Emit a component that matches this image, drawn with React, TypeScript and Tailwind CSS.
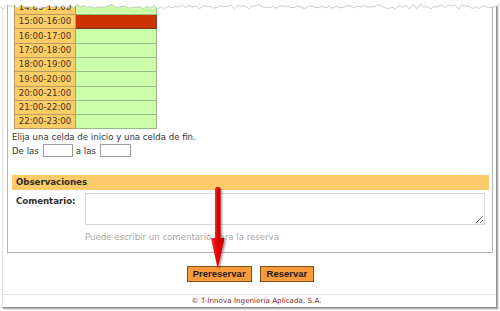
import React from "react";

const rows: [string, string][] = [
  ["14:00-15:00", "h-[14px]"],
  ["15:00-16:00", "h-[14px]"],
  ["16:00-17:00", "h-[15px]"],
  ["17:00-18:00", "h-[14px]"],
  ["18:00-19:00", "h-[14px]"],
  ["19:00-20:00", "h-[15px]"],
  ["20:00-21:00", "h-[14px]"],
  ["21:00-22:00", "h-[14px]"],
  ["22:00-23:00", "h-[14px]"],
];

const wavePts = (() => {
  const pts: [number, number][] = [];
  let s = 11;
  for (let x = 0; x <= 498; x += 3.5) {
    s = (s * 9301 + 49297) % 233280;
    const r = s / 233280;
    const y = 5 + r * 3.5 + (Math.floor(x / 3.5) % 2 === 0 ? -0.8 : 0.8);
    pts.push([x, y]);
  }
  return pts;
})();

const waveFill =
  "M0 0 " + wavePts.map(([x, y]) => `L${x.toFixed(1)} ${y.toFixed(1)}`).join(" ") + " L500 0 Z";
const waveLine =
  "M" + wavePts.map(([x, y]) => `${x.toFixed(1)} ${y.toFixed(1)}`).join(" L");

export default function App() {
  return (
    <div
      className="relative w-[500px] h-[311px] overflow-hidden bg-white text-[#333]"
      style={{ fontFamily: '"DejaVu Sans", Verdana, sans-serif' }}
    >
      <div className="ml-[2px] w-[495px] h-[308px] border-l border-l-[#e2e2e2] border-r border-r-[#8f8f8f] border-b border-b-[#8a8a8a] shadow-[1px_1px_0_#b8b8b8,2px_2px_0_#e0e0e0] flex flex-col">
        {/* Panel */}
        <div className="ml-[4px] w-[486px] h-[253px] border-l border-r border-b border-[#b4b4b4] flex flex-col">
          {/* table */}
          <div className="mt-[1px] ml-[6px] w-[143px] flex flex-col">
            {rows.map(([r, h]) => (
              <div key={r} className={`flex ${h}`}>
                <div className="w-[62px] bg-[#ffcc66] border-l border-b border-r border-[#b59a62] flex items-center justify-center text-[8.6px] leading-[13px] text-[#3a3020]">
                  {r}
                </div>
                <div
                  className={
                    r === "15:00-16:00"
                      ? "w-[81px] bg-[#cc3300] border-b border-r border-[#7a3a20]"
                      : "w-[81px] bg-[#ccffaa] border-b border-r border-[#98b886]"
                  }
                />
              </div>
            ))}
          </div>
          <div className="mt-[2px] ml-[4px] h-[12px] text-[8.6px] leading-[12px]">
            Elija una celda de inicio y una celda de fin.
          </div>
          <div className="mt-[1px] ml-[4px] h-[13px] flex items-center text-[8.6px] leading-[12px]">
            <span>De las</span>
            <input
              className="ml-[4px] w-[30px] h-[13px] border border-[#9c9c9c] bg-white outline-none"
              readOnly
            />
            <span className="ml-[3px]">a las</span>
            <input
              className="ml-[4px] w-[31px] h-[13px] border border-[#9c9c9c] bg-white outline-none"
              readOnly
            />
          </div>
          <div className="mt-[18px] ml-[4px] mr-[3px] h-[15px] bg-[#fecb6a] flex items-center pl-[4px] text-[8.6px] font-bold text-[#2e2a20]">
            Observaciones
          </div>
          <div className="mt-[3px] flex">
            <div className="w-[77px] pl-[8px] pt-[2px] text-[8.6px] leading-[12px] font-bold text-[#2e2e2e]">
              Comentario:
            </div>
            <textarea
              className="w-[400px] h-[32px] border border-[#d6d6d6] bg-white outline-none"
              readOnly
            />
          </div>
          <div className="mt-[6px] ml-[77px] h-[12px] text-[8.6px] leading-[12px] text-[#a8a8a8]">
            Puede escribir un comentario para la reserva
          </div>
        </div>
        {/* buttons */}
        <div
          className="mt-[13px] h-[16px] flex justify-center gap-[8px] pl-[2px]"
          style={{ fontFamily: '"Liberation Sans", Arial, sans-serif' }}
        >
          <div className="h-[16px] px-[5px] border border-[#7a5020] bg-[#fa9a3a] flex items-center text-[9.5px] font-bold text-[#1a1a1a]">
            Prereservar
          </div>
          <div className="h-[16px] px-[6px] border border-[#7a5020] bg-[#fa9a3a] flex items-center text-[9.5px] font-bold text-[#1a1a1a]">
            Reservar
          </div>
        </div>
        <div className="mt-[12px] border-t border-[#e4e4e4] h-[13px] flex justify-center items-center pl-[14px] text-[7.2px] leading-[12px] text-[#8a2a2a]">
          © T-Innova Ingeniería Aplicada, S.A.
        </div>
      </div>

      {/* torn top edge */}
      <svg className="absolute left-0 top-0" width="500" height="14" viewBox="0 0 500 14">
        <path d={waveFill} fill="#ffffff" />
        <path d={waveLine} fill="none" stroke="#b4b4b4" strokeWidth="0.7" />
      </svg>

      {/* red arrow */}
      <svg className="absolute left-0 top-0" width="500" height="311" viewBox="0 0 500 311">
        <defs>
          <filter id="ash" x="-50%" y="-20%" width="200%" height="140%">
            <feGaussianBlur stdDeviation="1" />
          </filter>
          <linearGradient id="ared" x1="0" x2="1" y1="0" y2="0">
            <stop offset="0" stopColor="#ff2a2a" />
            <stop offset="0.5" stopColor="#e60000" />
            <stop offset="1" stopColor="#b80000" />
          </linearGradient>
        </defs>
        <g transform="translate(1.5 1.5)" filter="url(#ash)" opacity="0.45">
          <rect x="215" y="187" width="5.5" height="53" rx="2.5" fill="#400000" />
          <path d="M211 238 L224.5 238 L217.7 268.5 Z" fill="#400000" />
        </g>
        <rect x="215" y="187" width="5.5" height="53" rx="2.5" fill="url(#ared)" />
        <path d="M211 238 L224.5 238 L217.7 268.5 Z" fill="url(#ared)" />
      </svg>
    </div>
  );
}
